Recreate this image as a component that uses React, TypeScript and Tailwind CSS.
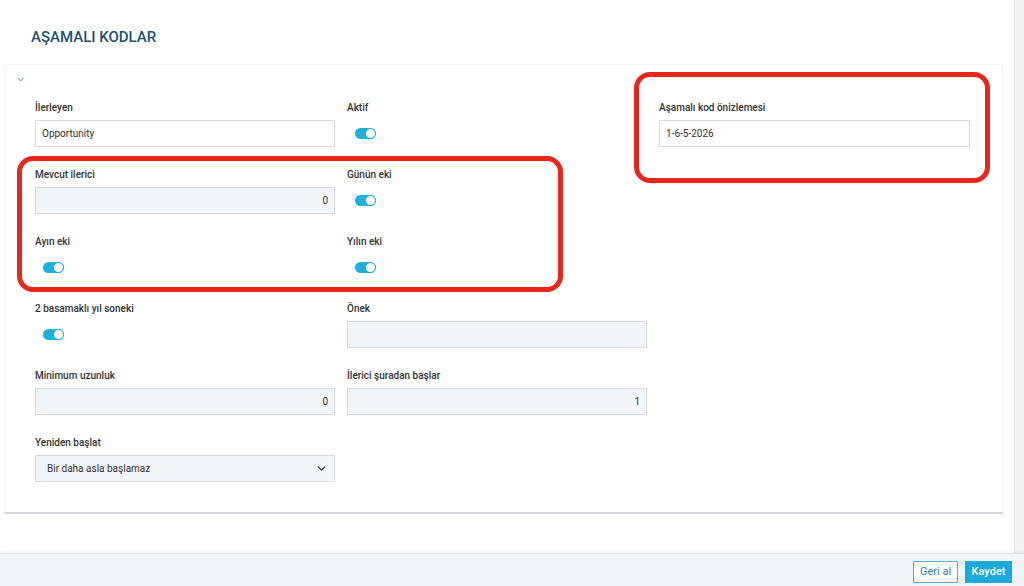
import { ChevronDown } from 'lucide-react';

const font = { fontFamily: 'Roboto, "Noto Sans", sans-serif' };

function Toggle() {
  return (
    <div className="flex h-[27px] items-center pl-[8px]">
      <div className="relative h-[11px] w-[21px] rounded-full bg-[#1cb0dc]">
        <div className="absolute right-0 top-0 h-[11px] w-[11px] rounded-full border-[1.5px] border-[#1cb0dc] bg-white" />
      </div>
    </div>
  );
}

function Input({ value = '', gray = false, right = false }: { value?: string; gray?: boolean; right?: boolean }) {
  return (
    <div
      className={`flex h-[27px] items-center border border-[#d6dadd] px-[6px] text-[10px] text-[#333] ${
        gray ? 'bg-[#f3f6f8]' : 'bg-white'
      } ${right ? 'justify-end' : ''}`}
    >
      {value}
    </div>
  );
}

function Field({ label, children }: { label: string; children: React.ReactNode }) {
  return (
    <div className="flex flex-col">
      <div className="h-[12px] text-[10px] font-medium leading-[12px] text-[#333]">{label}</div>
      <div className="mt-[6px]">{children}</div>
    </div>
  );
}

export default function App() {
  return (
    <div className="relative flex h-[586px] w-[1024px] flex-col overflow-hidden bg-white" style={font}>
      <div className="flex min-h-0 flex-1">
        <div className="flex-1">
          {/* sayfa başlığı */}
          <div className="flex h-[64px] items-start pl-[31px] pt-[27px]">
            <h1 className="text-[15px] font-medium leading-[20px] text-[#1d4f73]">AŞAMALI KODLAR</h1>
          </div>

          {/* form kartı */}
          <div className="ml-[4px] w-[999px] border border-b-2 border-[#f2f3f5] border-b-[#d3d7db] bg-white pb-[30px] pt-[9px]">
            <div className="h-[28px] pl-[10px]">
              <ChevronDown className="h-[11px] w-[11px] text-[#2f7fc1]" strokeWidth={2} />
            </div>
            <div className="grid grid-cols-[300px_300px_311px] gap-x-[12px] gap-y-[22px] pl-[30px]">
              <Field label="İlerleyen">
                <Input value="Opportunity" />
              </Field>
              <Field label="Aktif">
                <Toggle />
              </Field>
              <Field label="Aşamalı kod önizlemesi">
                <Input value="1-6-5-2026" />
              </Field>

              <Field label="Mevcut ilerici">
                <Input value="0" gray right />
              </Field>
              <Field label="Günün eki">
                <Toggle />
              </Field>
              <div />

              <Field label="Ayın eki">
                <Toggle />
              </Field>
              <Field label="Yılın eki">
                <Toggle />
              </Field>
              <div />

              <Field label="2 basamaklı yıl soneki">
                <Toggle />
              </Field>
              <Field label="Önek">
                <Input gray />
              </Field>
              <div />

              <Field label="Minimum uzunluk">
                <Input value="0" gray right />
              </Field>
              <Field label="İlerici şuradan başlar">
                <Input value="1" gray right />
              </Field>
              <div />

              <Field label="Yeniden başlat">
                <div className="flex h-[27px] items-center justify-between border border-[#d6dadd] bg-[#f3f6f8] pl-[11px] pr-[6px] text-[10px] text-[#333]">
                  <span>Bir daha asla başlamaz</span>
                  <ChevronDown className="h-[13px] w-[13px] text-[#333]" strokeWidth={2.5} />
                </div>
              </Field>
            </div>
          </div>
        </div>
        <div className="w-[10px] border-l border-[#e4e7ea] bg-[#f0f2f4]" />
      </div>

      {/* alt çubuk */}
      <div className="flex h-[33px] items-start justify-end gap-[7px] border-t border-[#dde2e6] bg-[#f1f5f8] pr-[12px] pt-[7px] shadow-[0_-1px_3px_rgba(0,0,0,0.06)]">
        <button className="h-[22px] w-[45px] border border-[#5aaed6] bg-white text-[11px] text-[#2f7fb8]">Geri al</button>
        <button className="h-[22px] w-[47px] bg-[#19a9dc] text-[11px] font-medium text-white">Kaydet</button>
      </div>

      {/* işaretleme çerçeveleri */}
      <div className="pointer-events-none absolute left-[17px] top-[156px] h-[136px] w-[546px] rounded-[16px] border-[5px] border-[#e8261c]" />
      <div className="pointer-events-none absolute left-[634px] top-[72px] h-[111px] w-[356px] rounded-[16px] border-[5px] border-[#e8261c]" />
    </div>
  );
}
